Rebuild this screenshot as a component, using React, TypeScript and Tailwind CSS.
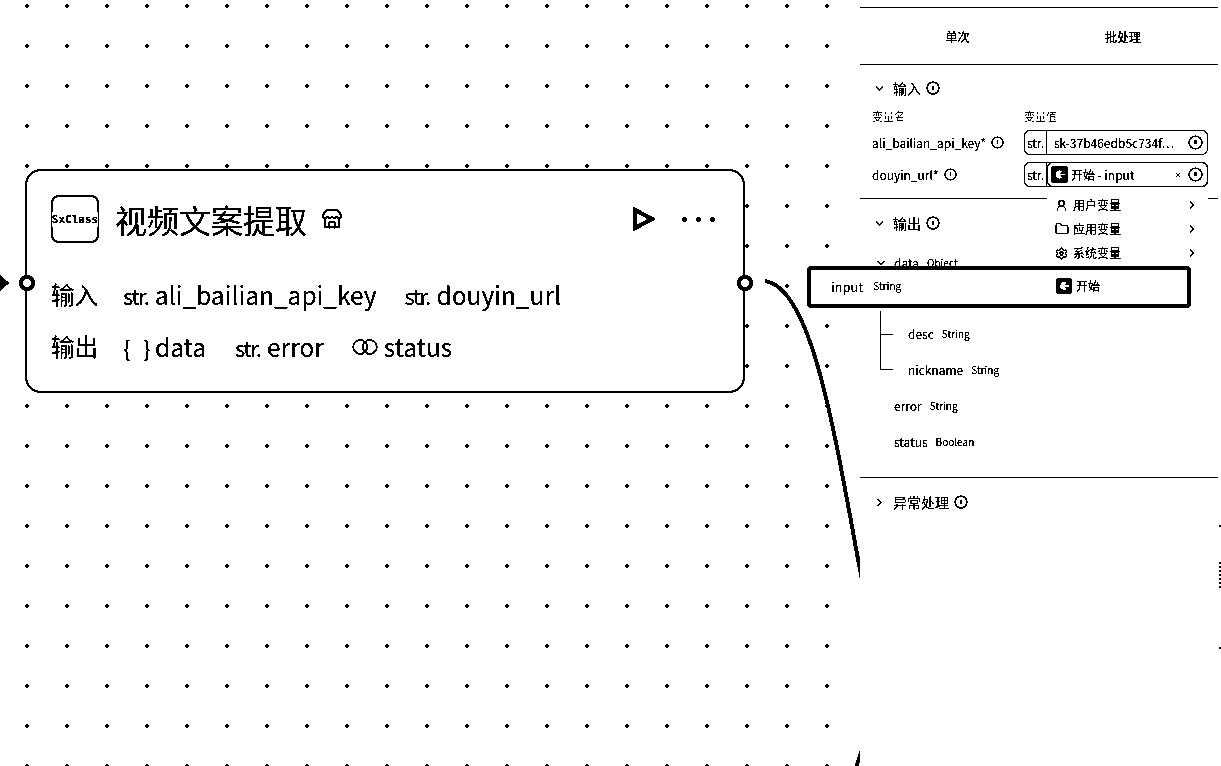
import React from 'react';
import { ChevronDown, ChevronRight, Folder, Settings, Store, UserRound, X } from 'lucide-react';

const fontStack = 'font-["Noto_Sans_CJK_SC","Noto_Sans",sans-serif]';

const InfoIcon: React.FC<{ size?: number }> = ({ size = 14 }) => (
  <svg width={size} height={size} viewBox="0 0 13 13" fill="none" stroke="currentColor" className="shrink-0" aria-hidden="true">
    <circle cx="6.5" cy="6.5" r="5.5" strokeWidth="1.2" />
    <path d="M6.5 4.5v3.5" strokeWidth="1.6" />
  </svg>
);

const StartIcon: React.FC<{ size: number }> = ({ size }) => (
  <svg width={size} height={size} viewBox="0 0 16 16" className="shrink-0" aria-hidden="true">
    <rect width="16" height="16" rx="3" fill="#000" />
    <path d="M11 5.2A4 4 0 1 0 11 10.8L8.6 8.8H13V7.2H8.6Z" fill="#fff" />
  </svg>
);

const Handle: React.FC<{ className: string }> = ({ className }) => (
  <span className={`absolute top-[104px] h-[16px] w-[16px] rounded-full border-[4px] border-black bg-white ${className}`} />
);

const TypeTag: React.FC<{ children: React.ReactNode }> = ({ children }) => (
  <span className="flex w-[26px] justify-between text-[22px] leading-none tracking-[-1.5px]">{children}</span>
);

const NodeField: React.FC<{ tag: React.ReactNode; name: string }> = ({ tag, name }) => (
  <span className="flex items-center gap-[6px]">
    {tag}
    <span className="text-[24.5px] leading-none">{name}</span>
  </span>
);

const NodeCard = () => (
  <div className="absolute left-[25px] top-[169px] flex h-[224px] w-[720px] flex-col rounded-2xl border-2 border-black bg-white pl-[24px] pr-[26px] pt-[24px]">
    <Handle className="left-[-8px]" />
    <Handle className="right-[-10px]" />
    <div className="flex h-[48px] items-center">
      <div className="flex h-[48px] w-[48px] shrink-0 items-center justify-center rounded-lg border-2 border-black">
        <span className="whitespace-nowrap bg-white py-[2px] font-['DejaVu_Sans_Mono',monospace] text-[11px] font-bold leading-[11px]">SxClass</span>
      </div>
      <h1 className="ml-[16px] text-[32px] font-normal leading-none">视频文案提取</h1>
      <Store size={22} strokeWidth={2} className="ml-[14px]" />
      <svg width="22" height="24" viewBox="0 0 22 24" fill="none" className="ml-auto mr-[27px]" aria-hidden="true">
        <path d="M2 3v18l17-9Z" stroke="#000" strokeWidth="4" />
      </svg>
      <div className="flex gap-[9px] pr-[2px] pt-[1px]">
        <span className="h-[5px] w-[5px] rounded-full bg-black" />
        <span className="h-[5px] w-[5px] rounded-full bg-black" />
        <span className="h-[5px] w-[5px] rounded-full bg-black" />
      </div>
    </div>
    <div className="mt-[38px] flex h-[28px] items-center">
      <span className="w-[72px] text-[23.5px] leading-none">输入</span>
      <NodeField tag={<TypeTag>str.</TypeTag>} name="ali_bailian_api_key" />
      <span className="w-[28px]" />
      <NodeField tag={<TypeTag>str.</TypeTag>} name="douyin_url" />
    </div>
    <div className="mt-[24px] flex h-[28px] items-center">
      <span className="w-[72px] text-[23.5px] leading-none">输出</span>
      <NodeField tag={<TypeTag><span>{'{'}</span><span>{'}'}</span></TypeTag>} name="data" />
      <span className="w-[29px]" />
      <NodeField tag={<TypeTag>str.</TypeTag>} name="error" />
      <span className="w-[28px]" />
      <NodeField
        tag={
          <svg width="26" height="16" viewBox="0 0 27 16" fill="none" stroke="#000" strokeWidth="1.6" aria-hidden="true">
            <circle cx="8.5" cy="8" r="7.2" />
            <circle cx="18.5" cy="8" r="7.2" />
          </svg>
        }
        name="status"
      />
    </div>
  </div>
);

const Canvas = () => (
  <div className="relative min-w-0 flex-1 bg-white bg-[radial-gradient(circle,#000_1.6px,transparent_2px)] bg-[size:40px_40px] bg-[position:7px_-14px]">
    <svg width="1221" height="766" className="absolute left-0 top-0" fill="none" aria-hidden="true">
      <path d="M0 276l8 7-8 7Z" fill="#000" stroke="#000" strokeWidth="1.5" />
      <path d="M765 281C812 288 834 430 860 570C885 690 868 730 856 768" stroke="#000" strokeWidth="3.6" />
    </svg>
    <NodeCard />
  </div>
);

const SectionTitle: React.FC<{ title: string; open?: boolean }> = ({ title, open = true }) => (
  <div className="flex items-center text-[14px] leading-none">
    <span className="flex w-[33px] justify-center pl-[6px]">
      {open ? <ChevronDown size={13} strokeWidth={2.2} /> : <ChevronRight size={13} strokeWidth={2.2} />}
    </span>
    <span>{title}</span>
    <span className="ml-[5px]"><InfoIcon /></span>
  </div>
);

const VarRow: React.FC<{ name: string; type: string; className?: string }> = ({ name, type, className = '' }) => (
  <div className={`flex h-[36px] items-center gap-[8px] ${className}`}>
    <span className="text-[12px] leading-none">{name}</span>
    <span className="text-[10px] leading-none">{type}</span>
  </div>
);

const ParamLabel: React.FC<{ name: string }> = ({ name }) => (
  <div className="flex w-[152px] items-center gap-[5px] text-[12px] leading-none">
    <span>{name}</span>
    <InfoIcon size={13} />
  </div>
);

const ValueBox: React.FC<{ children: React.ReactNode }> = ({ children }) => (
  <div className="flex h-[25px] w-[184px] items-stretch rounded-md border border-black">
    <span className="flex w-[22px] items-center justify-center border-r border-black text-[12px] leading-none">str.</span>
    {children}
  </div>
);

const MenuItem: React.FC<{ icon: React.ReactNode; label: string }> = ({ icon, label }) => (
  <div className="flex h-[24px] items-center pl-[8px] pr-[9px] text-[12px] leading-none">
    <span className="flex w-[18px]">{icon}</span>
    <span>{label}</span>
    <ChevronRight size={14} strokeWidth={2} className="ml-auto" />
  </div>
);

const Panel = () => (
  <aside className="relative z-10 w-[361px] shrink-0 bg-white pr-[3px] pt-[7px]">
    <div className="flex h-[58px] items-center border-y border-black pt-px text-[12px] font-medium leading-none">
      <span className="w-[195px] text-center">单次</span>
      <span className="w-[136px] text-center">批处理</span>
    </div>

    <section className="h-[134px] border-b border-black pl-[12px] pt-[16px]">
      <div className="-ml-[12px]"><SectionTitle title="输入" /></div>
      <div className="mt-[14px] flex h-[14px] items-center text-[11px] leading-none text-gray-500">
        <span className="w-[152px]">变量名</span>
        <span>变量值</span>
      </div>
      <div className="mt-[7px] flex items-center">
        <ParamLabel name="ali_bailian_api_key*" />
        <ValueBox>
          <span className="flex flex-1 items-center justify-between whitespace-nowrap pl-[7px] pr-[4px] text-[12px] leading-none">
            sk-37b46edb5c734f⋯
            <InfoIcon size={15} />
          </span>
        </ValueBox>
      </div>
      <div className="mt-[7px] flex items-center">
        <ParamLabel name="douyin_url*" />
        <ValueBox>
          <span className="-my-px -mr-px flex flex-1 items-center rounded-md border border-black pl-[3px] pr-[4px] text-[12px] leading-none">
            <StartIcon size={17} />
            <span className="ml-[3px]">开始 - input</span>
            <X size={8} strokeWidth={2} className="ml-auto mr-[6px]" />
            <InfoIcon size={15} />
          </span>
        </ValueBox>
      </div>
    </section>

    <section className="h-[279px] border-b border-black pt-[17px]">
      <SectionTitle title="输出" />
      <div className="mt-[26px] flex h-[14px] items-center pl-[15px]">
        <ChevronDown size={12} strokeWidth={2} />
        <VarRow name="data" type="Object" className="ml-[7px]" />
      </div>
      {/* the input row of the popup sits over this part of the list */}
      <div className="relative ml-[20px] mt-[46px] pl-[28px]">
        <span className="absolute left-0 top-[-5px] h-[59px] w-px bg-black" />
        <span className="absolute left-0 top-[18px] h-px w-[13px] bg-black" />
        <span className="absolute left-0 top-[53px] h-px w-[13px] bg-black" />
        <VarRow name="desc" type="String" />
        <VarRow name="nickname" type="String" />
      </div>
      <VarRow name="error" type="String" className="pl-[34px]" />
      <VarRow name="status" type="Boolean" className="pl-[34px]" />
    </section>

    <section className="pt-[17px]">
      <SectionTitle title="异常处理" open={false} />
    </section>

    {/* variable picker dropdown */}
    <div className="absolute left-[187px] top-[188px] h-[78px] w-[161px] bg-white pt-[5px]">
      <MenuItem icon={<UserRound size={13} strokeWidth={2} />} label="用户变量" />
      <MenuItem icon={<Folder size={14} strokeWidth={2} />} label="应用变量" />
      <MenuItem icon={<Settings size={13} strokeWidth={2} />} label="系统变量" />
    </div>

    {/* scraps of the canvas showing past the panel edge */}
    <span className="absolute right-0 top-[525px] h-[2px] w-[2px] bg-black" />
    <span className="absolute right-0 top-[562px] h-[28px] w-[2px] bg-[repeating-linear-gradient(#000_0_2px,transparent_2px_4px)]" />
    <span className="absolute right-0 top-[647px] h-[2px] w-[2px] bg-black" />
  </aside>
);

const App: React.FC = () => (
  <div className={`relative flex h-[766px] w-[1221px] overflow-hidden bg-white text-black ${fontStack} grayscale brightness-[0.75] contrast-[100]`}>
    <Canvas />
    <Panel />
    {/* highlighted picker row, drawn over both the canvas and the panel */}
    <div className="absolute left-[807px] top-[266px] z-20 flex h-[42px] w-[384px] items-center rounded-sm border-[4px] border-black bg-white pb-[2px] pl-[20px]">
      <span className="text-[13px] leading-none">input</span>
      <span className="ml-[10px] text-[10px] leading-none">String</span>
      <span className="ml-auto flex w-[131px] items-center text-[12px] leading-none">
        <StartIcon size={16} />
        <span className="ml-[4px]">开始</span>
      </span>
    </div>
  </div>
);

export default App;
